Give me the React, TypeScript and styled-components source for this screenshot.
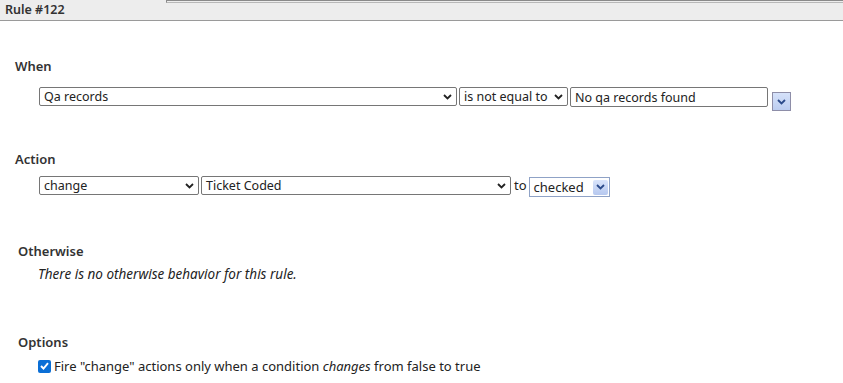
import styled, { createGlobalStyle } from "styled-components";

const GlobalStyle = createGlobalStyle`
  body {
    margin: 0;
    background: #ffffff;
    font-family: "Noto Sans", "Open Sans", sans-serif;
    color: #222;
  }
`;

function Chevron({ color = "#222" }: { color?: string }) {
  return (
    <svg width="9" height="6" viewBox="0 0 9 6">
      <path d="M1 1 L4.5 4.5 L8 1" fill="none" stroke={color} strokeWidth="1.8" />
    </svg>
  );
}

function Select({ value, width }: { value: string; width: number }) {
  return (
    <SelectBox $width={width}>
      <span>{value}</span>
      <Chevron />
    </SelectBox>
  );
}

export default function App() {
  return (
    <>
      <GlobalStyle />
      <Header>
        <Title>Rule #122</Title>
        <TabEdge />
      </Header>

      <Section $top={37} $left={15}>
        <Label>When</Label>
        <Row $gap={13}>
          <Select value="Qa records" width={418} />
          <Select value="is not equal to" width={109} />
          <TextInput>No qa records found</TextInput>
          <DropButton>
            <Chevron color="#2b4a8a" />
          </DropButton>
        </Row>
      </Section>

      <Section $top={40} $left={15}>
        <Label>Action</Label>
        <Row $gap={9}>
          <Select value="change" width={160} />
          <Select value="Ticket Coded" width={310} />
          <Joiner>to</Joiner>
          <OldSelect>
            <span>checked</span>
            <OldArrow>
              <Chevron color="#2b4a8a" />
            </OldArrow>
          </OldSelect>
        </Row>
      </Section>

      <Section $top={46} $left={18}>
        <Label>Otherwise</Label>
        <Note>There is no otherwise behavior for this rule.</Note>
      </Section>

      <Section $top={52} $left={18}>
        <Label>Options</Label>
        <CheckRow>
          <Check>
            <svg width="9" height="8" viewBox="0 0 9 8">
              <path d="M1 4 L3.5 6.5 L8 1.2" fill="none" stroke="#fff" strokeWidth="1.9" />
            </svg>
          </Check>
          <span>
            Fire "change" actions only when a condition <em>changes</em> from false to true
          </span>
        </CheckRow>
      </Section>
    </>
  );
}

const Header = styled.div`
  display: flex;
  align-items: flex-start;
  height: 20px;
  background: #ededed;
  border-bottom: 1px solid #9a9a9a;
`;

const Title = styled.div`
  width: 161px;
  padding-left: 5px;
  font-size: 12.5px;
  font-weight: 600;
  line-height: 20px;
  color: #333;
`;

const TabEdge = styled.div`
  flex: 1;
  height: 1px;
  border-top: 1px solid #8a8a8a;
  border-left: 1px solid #8a8a8a;
  border-bottom: 1px solid #b8b8b8;
`;

const Section = styled.div<{ $top: number; $left: number }>`
  margin-top: ${({ $top }) => $top}px;
  padding-left: ${({ $left }) => $left}px;
`;

const Label = styled.div`
  font-size: 13px;
  font-weight: 600;
  line-height: 16px;
  color: #333;
`;

const Row = styled.div<{ $gap: number }>`
  display: flex;
  align-items: flex-start;
  gap: 2px;
  margin-top: ${({ $gap }) => $gap}px;
  padding-left: 24px;
`;

const SelectBox = styled.div<{ $width: number }>`
  box-sizing: border-box;
  width: ${({ $width }) => $width}px;
  height: 19px;
  display: flex;
  align-items: center;
  justify-content: space-between;
  padding: 0 4px 0 4px;
  border: 1px solid #767676;
  border-radius: 2px;
  font-size: 12.5px;
  color: #222;
  white-space: nowrap;
  overflow: hidden;
`;

const TextInput = styled.div`
  box-sizing: border-box;
  width: 198px;
  height: 20px;
  padding: 0 4px;
  display: flex;
  align-items: center;
  border: 1px solid #767676;
  border-radius: 2px;
  font-size: 12.5px;
`;

const DropButton = styled.div`
  box-sizing: border-box;
  width: 19px;
  height: 19px;
  margin: 5px 0 0 2px;
  display: flex;
  align-items: center;
  justify-content: center;
  background: linear-gradient(#d6e2fa, #bccdf0);
  border: 1px solid #8e8ea8;
`;

const Joiner = styled.span`
  font-size: 13px;
  line-height: 19px;
  margin: 0 0 0 1px;
`;

const OldSelect = styled.div`
  box-sizing: border-box;
  width: 81px;
  height: 20px;
  margin-top: 1px;
  display: flex;
  align-items: center;
  justify-content: space-between;
  padding: 0 1px 0 4px;
  border: 1px solid #8fa2c6;
  font-size: 13px;
`;

const OldArrow = styled.div`
  width: 15px;
  height: 15px;
  display: flex;
  align-items: center;
  justify-content: center;
  background: linear-gradient(#d9e4fb, #b6c8ef);
  border-radius: 2px;
`;

const Note = styled.div`
  margin-top: 7px;
  padding-left: 20px;
  font-size: 13.5px;
  font-style: italic;
  line-height: 16px;
  color: #222;
`;

const CheckRow = styled.div`
  display: flex;
  align-items: center;
  gap: 3px;
  margin-top: 8px;
  padding-left: 20px;
  font-size: 13px;
  line-height: 16px;
  color: #222;

  em {
    font-style: italic;
  }
`;

const Check = styled.span`
  width: 13px;
  height: 13px;
  border-radius: 2px;
  background: #0b6fd6;
  display: flex;
  align-items: center;
  justify-content: center;
`;
